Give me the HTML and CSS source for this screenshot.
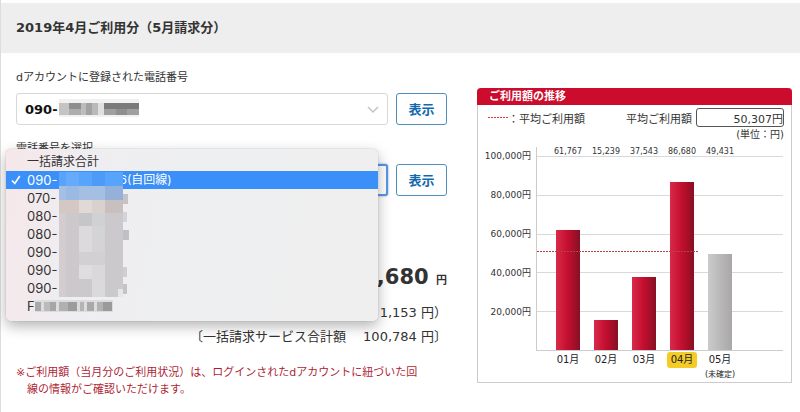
FILE: index.html
```html
<!DOCTYPE html>
<html lang="ja">
<head>
    <meta charset="UTF-8">
    <meta name="viewport" content="width=device-width, initial-scale=1">
    <title>ご利用料金</title>
    <link rel="stylesheet" href="styles.css">
</head>
<body>
<div class="page">
    <h1 class="title">2019年4月ご利用分（5月請求分）</h1>
    <div class="main">
        <div class="bill">
            <form class="field">
                <label for="tel1">dアカウントに登録された電話番号</label>
                <div class="row">
                    <div class="select">
                        <select id="tel1"><option>090-</option></select>
                        <svg class="mask" width="80" height="18" viewBox="0 0 80 18">
                            <rect width="80" height="18" fill="#f1f1f1"/>
                            <rect y="4" width="10" height="12" fill="#c4c4c4"/>
                            <rect x="10" y="4" width="12" height="6" fill="#8e8e8e"/>
                            <rect x="10" y="10" width="12" height="6" fill="#adadad"/>
                            <rect x="22" y="4" width="5" height="12" fill="#bcbcbc"/>
                            <rect x="27" y="4" width="6" height="12" fill="#a2a2a2"/>
                            <rect x="33" y="4" width="6" height="12" fill="#b9b9b9"/>
                            <rect x="39" y="4" width="6" height="12" fill="#e0e0e0"/>
                            <rect x="45" y="4" width="35" height="6" fill="#7a7a7a"/>
                            <rect x="45" y="10" width="35" height="6" fill="#a0a0a0"/>
                            <rect x="57" y="10" width="11" height="6" fill="#8f8f8f"/>
                        </svg>
                        <svg class="chevron" width="12" height="8" viewBox="0 0 12 8"><path d="M1 1l5 5 5-5" fill="none" stroke="#c4c4c4" stroke-width="1.5"/></svg>
                    </div>
                    <button type="button" class="show">表示</button>
                </div>
            </form>
            <form class="field">
                <label for="tel2">電話番号を選択</label>
                <div class="row">
                    <div class="select focus">
                        <select id="tel2"><option>090-</option></select>
                        <div class="menu">
                            <ul>
                                <li class="cjk">一括請求合計</li>
                                <li class="current">
                                    <svg class="check" width="10" height="10" viewBox="0 0 10 10"><path d="M1 5.5l2.8 3L8.8 1" fill="none" stroke="#fff" stroke-width="1.7"/></svg>
                                    <span>090-</span><span class="cjk tail">6(自回線)</span>
                                </li>
                                <li>070-</li>
                                <li>080-</li>
                                <li>080-</li>
                                <li>090-</li>
                                <li>090-</li>
                                <li>090-</li>
                                <li>F
                                    <svg width="78" height="12" viewBox="0 0 78 12">
                                        <rect width="78" height="12" fill="#dcdcdc"/>
                                        <rect y="2" width="6" height="9" fill="#a9a9a9"/>
                                        <rect x="9" y="2" width="6" height="9" fill="#bbb"/>
                                        <rect x="15" y="2" width="6" height="9" fill="#a6a6a6"/>
                                        <rect x="24" y="2" width="9" height="9" fill="#b0b0b0"/>
                                        <rect x="33" y="2" width="9" height="9" fill="#9c9c9c"/>
                                        <rect x="45" y="2" width="4" height="9" fill="#b4b4b4"/>
                                        <rect x="52" y="2" width="7" height="9" fill="#a9a9a9"/>
                                        <rect x="62" y="2" width="6" height="9" fill="#b2b2b2"/>
                                        <rect x="68" y="2" width="9" height="9" fill="#9a9a9a"/>
                                    </svg>
                                </li>
                            </ul>
                            <svg class="mosaic" width="71" height="125" viewBox="0 0 71 125">
                                <rect width="64" height="14" fill="#57a4fd"/>
                                <rect x="7" width="13" height="14" fill="#66abfb"/>
                                <rect x="33" width="13" height="14" fill="#4c9bf9"/>
                                <rect y="14" width="64" height="14" fill="#a5bfe2"/>
                                <rect x="7" y="14" width="13" height="14" fill="#9ab9e3"/>
                                <rect x="46" y="14" width="18" height="14" fill="#96b1d9"/>
                                <rect y="28" width="64" height="97" fill="#cbc9cb"/>
                                <rect y="28" width="20" height="13" fill="#d4c8c4"/>
                                <rect x="20" y="28" width="13" height="13" fill="#e0d9d6"/>
                                <rect x="33" y="28" width="13" height="13" fill="#d8d1ce"/>
                                <rect x="46" y="28" width="18" height="13" fill="#c7c0bf"/>
                                <rect x="20" y="41" width="13" height="13" fill="#c6c6c9"/>
                                <rect x="33" y="41" width="13" height="13" fill="#d0d1d5"/>
                                <rect x="20" y="54" width="13" height="26" fill="#dddadd"/>
                                <rect x="33" y="54" width="13" height="26" fill="#d4d3d6"/>
                                <rect x="20" y="80" width="26" height="13" fill="#d2d0d2"/>
                                <rect x="20" y="93" width="13" height="14" fill="#dfdddf"/>
                                <rect x="33" y="93" width="13" height="14" fill="#dad9da"/>
                                <rect x="33" y="107" width="13" height="18" fill="#dadada"/>
                                <rect x="59" y="117" width="5" height="8" fill="#e6e6e6"/>
                                <rect y="41" width="7" height="84" fill="#d3cdd0"/>
                                <rect x="64" y="22" width="5" height="10" fill="#c2c4c8"/>
                                <rect x="64" y="40" width="4" height="10" fill="#d3d4d8"/>
                                <rect x="64" y="58" width="6" height="10" fill="#bfc0c4"/>
                                <rect x="64" y="95" width="4" height="10" fill="#cfcfd2"/>
                                <rect x="64" y="112" width="4" height="10" fill="#c4c4c6"/>
                            </svg>
                        </div>
                    </div>
                    <button type="button" class="show">表示</button>
                </div>
            </form>
            <div class="amount">
                <p class="total">86,680 <span>円</span></p>
                <p>1,153 円）</p>
                <p>〔一括請求サービス合計額　 100,784 円〕</p>
            </div>
            <p class="note">※ご利用額（当月分のご利用状況）は、ログインされたdアカウントに紐づいた回<br>線の情報がご確認いただけます。</p>
        </div>
        <div class="card">
            <h2>ご利用額の推移</h2>
            <div class="legend">
                <span class="key"><i></i>：平均ご利用額</span>
                <label for="avg">平均ご利用額</label>
                <input id="avg" type="text" value="50,307円" readonly>
            </div>
            <p class="unit">(単位：円)</p>
            <div class="chart">
                <div class="scale">
                    <span>100,000円</span>
                    <span>80,000円</span>
                    <span>60,000円</span>
                    <span>40,000円</span>
                    <span>20,000円</span>
                </div>
                <div class="plot">
                    <div class="cols values">
                        <span>61,767</span><span>15,239</span><span>37,543</span><span>86,680</span><span>49,431</span>
                    </div>
                    <div class="area">
                        <div class="lines"><i></i><i></i><i></i><i></i><i></i></div>
                        <div class="cols bars">
                            <div><i style="height:61.767%"></i></div>
                            <div><i style="height:15.239%"></i></div>
                            <div><i style="height:37.543%"></i></div>
                            <div><i style="height:86.68%"></i></div>
                            <div><i class="gray" style="height:49.431%"></i></div>
                        </div>
                        <div class="average" style="bottom:50.307%"></div>
                    </div>
                </div>
                <div class="cols months">
                    <div>01月</div>
                    <div>02月</div>
                    <div>03月</div>
                    <div><b>04月</b></div>
                    <div>05月<small>(未確定)</small></div>
                </div>
            </div>
        </div>
    </div>
</div>
</body>
</html>
```
FILE: styles.css
```css
*{
    margin: 0;
    padding: 0;
    box-sizing: border-box;
}
body{
    background-color: #fff;
    color: #333;
    font-family: "DejaVu Sans", "Noto Sans CJK JP", sans-serif;
    font-size: 11px;
}
ul{
    list-style: none;
}
.page{
    min-height: 100vh;
    border-left: 1px solid #ddd;
    padding-top: 3px;
}
.title{
    background-color: #eee;
    padding: 0 15px;
    font-size: 13px;
    line-height: 50px;
}
.main{
    display: flex;
    align-items: flex-start;
    gap: 30px;
    padding: 16px 8px 0 15px;
}
.bill{
    flex: 1;
    min-width: 0;
}

/* 電話番号 */
.field{
    margin-bottom: 15px;
}
.field label{
    display: block;
    line-height: 18px;
    margin-bottom: 6px;
}
.row{
    display: flex;
    gap: 8px;
}
.select{
    flex: 1;
    position: relative;
}
.select select{
    width: 100%;
    height: 32px;
    padding: 0 8px;
    border: 1px solid #d8d8d8;
    border-radius: 3px;
    background-color: #fff;
    color: #111;
    font: bold 13px "DejaVu Sans", "Noto Sans CJK JP", sans-serif;
    appearance: none;
}
.focus select{
    border: 2px solid #5b95e5;
    box-shadow: 0 0 2px #5b95e5;
}
.mask{
    position: absolute;
    left: 43px;
    top: 6px;
}
.chevron{
    position: absolute;
    right: 9px;
    top: 13px;
}
.show{
    width: 51px;
    height: 32px;
    padding-bottom: 2px;
    border: 1px solid #4f8fbb;
    border-radius: 3px;
    background-color: #fff;
    color: #1169ae;
    font: bold 13px "DejaVu Sans", "Noto Sans CJK JP", sans-serif;
}

/* プルダウン */
.menu{
    position: absolute;
    z-index: 2;
    left: -10px;
    right: 10px;
    top: -15px;
    padding: 4px 0 6px;
    border-radius: 5px;
    background: linear-gradient(100deg, #f6e7ea 0, #efedf0 20%, #eeeff1 45%, #efefef 100%);
    box-shadow: 0 0 1px #888, 0 5px 14px rgba(0,0,0,.3);
    font-family: Inter, "Noto Sans CJK JP", sans-serif;
    font-size: 13px;
}
.menu li{
    display: flex;
    align-items: center;
    height: 18px;
    padding-left: 21px;
    line-height: 18px;
    white-space: nowrap;
}
.menu .cjk{
    font-size: 12px;
}
.menu .current{
    position: relative;
    background-color: #3b8ff8;
    color: #fff;
}
.check{
    position: absolute;
    left: 5px;
    top: 4px;
}
.menu .tail{
    padding-left: 62px;
}
.mosaic{
    position: absolute;
    left: 53px;
    top: 23px;
}

/* 金額 */
.amount{
    padding-top: 51px;
    text-align: right;
    font-size: 13px;
    line-height: 24px;
}
.amount .total{
    margin-bottom: 5px;
    font-size: 21px;
    font-weight: bold;
    line-height: 30px;
}
.total span{
    font-size: 11px;
}
.note{
    margin-top: 15px;
    padding-left: 11px;
    color: #ae1f36;
    line-height: 17px;
    text-indent: -11px;
    white-space: nowrap;
}

/* グラフ */
.card{
    width: 315px;
    margin-top: 19px;
    border: 1px solid #ccc;
    border-top: 0;
    border-radius: 4px 4px 0 0;
}
.card h2{
    margin: 0 -1px;
    padding-left: 12px;
    border-radius: 4px 4px 0 0;
    background-color: #cc0c2d;
    color: #fff;
    font-size: 11px;
    line-height: 17px;
}
.legend{
    display: flex;
    align-items: center;
    padding: 3px 7px 0 10px;
}
.key{
    display: flex;
    align-items: center;
    margin-right: auto;
}
.key i{
    width: 20px;
    height: 1px;
    background: repeating-linear-gradient(to right, #e0383c 0 2px, #fff 2px 3px);
}
.legend input{
    width: 88px;
    height: 19px;
    margin-left: 4px;
    border: 1px solid #555;
    border-radius: 3px;
    background-color: #fff;
    color: #333;
    font: 11px "DejaVu Sans", "Noto Sans CJK JP", sans-serif;
    text-align: right;
}
.unit{
    padding-right: 7px;
    font-size: 10px;
    line-height: 16px;
    text-align: right;
}
.chart{
    display: grid;
    grid-template-columns: 53px 1fr;
    column-gap: 5px;
    padding: 4px 8px 0 0;
}
.scale{
    padding-top: 3px;
    font-size: 9px;
    text-align: right;
}
.scale span{
    display: block;
    height: 39px;
    line-height: 13px;
    white-space: nowrap;
}
.plot{
    border-left: 1px solid #ccc;
}
.cols{
    display: grid;
    grid-template-columns: repeat(5, 38px);
    padding-left: 12px;
    text-align: center;
}
.values{
    font-size: 8px;
    line-height: 9px;
}
.area{
    display: grid;
    position: relative;
    height: 195px;
    border-bottom: 1px solid #ccc;
}
.lines, .bars{
    grid-area: 1 / 1;
}
.lines{
    display: grid;
}
.lines i{
    border-top: 1px solid #d9d9d9;
}
.bars div{
    display: flex;
    align-items: flex-end;
    justify-content: center;
}
.bars i{
    width: 24px;
    background: linear-gradient(to right, #d92a4a, #c30e2e 50%, #861024);
}
.bars .gray{
    background: linear-gradient(to right, #cbcbcb, #a9a7a8);
}
.average{
    position: absolute;
    left: 0;
    width: 66%;
    height: 1px;
    background: repeating-linear-gradient(to right, #b8403f 0 2px, transparent 2px 3px);
}
.months{
    grid-column: 2;
    height: 31px;
    padding-left: 13px;
    padding-top: 1px;
    color: #222;
    font-size: 10px;
    line-height: 16px;
}
.months b{
    display: block;
    margin: 0 4px;
    border-radius: 3px;
    background-color: #f5cb27;
    font-weight: normal;
}
.months small{
    display: block;
    font-size: 8px;
    line-height: 13px;
    white-space: nowrap;
}
```
